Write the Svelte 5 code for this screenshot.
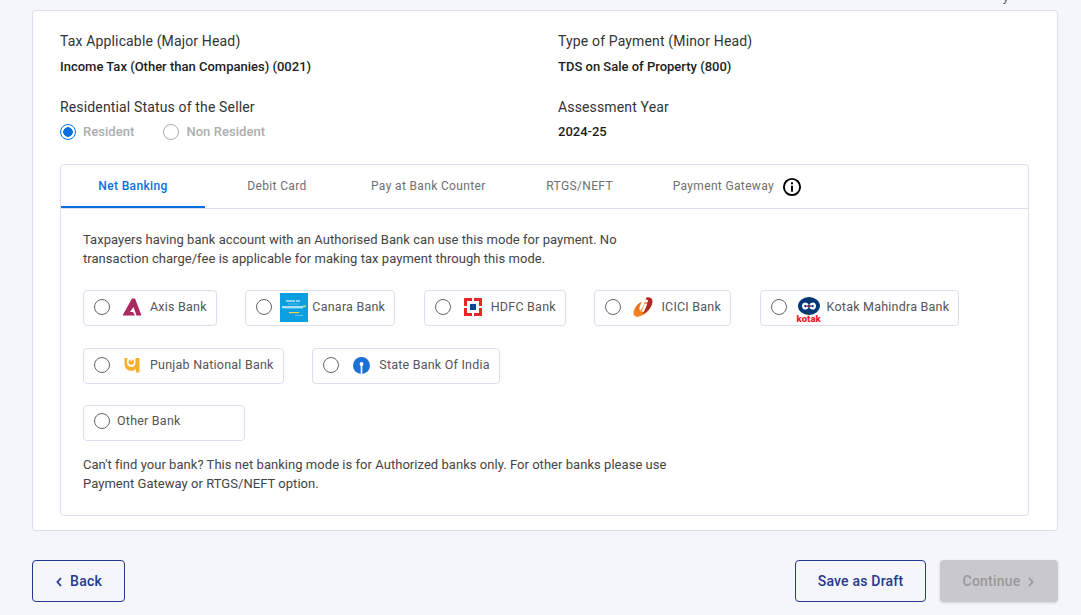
<script lang="ts">
type Bank = { name: string; logo: string }

const summary = [
  { label: 'Tax Applicable (Major Head)', value: 'Income Tax (Other than Companies) (0021)' },
  { label: 'Type of Payment (Minor Head)', value: 'TDS on Sale of Property (800)' },
]

const tabs = ['Net Banking', 'Debit Card', 'Pay at Bank Counter', 'RTGS/NEFT', 'Payment Gateway']

const banks: Bank[] = [
  { name: 'Axis Bank', logo: 'axis' },
  { name: 'Canara Bank', logo: 'canara' },
  { name: 'HDFC Bank', logo: 'hdfc' },
  { name: 'ICICI Bank', logo: 'icici' },
  { name: 'Kotak Mahindra Bank', logo: 'kotak' },
  { name: 'Punjab National Bank', logo: 'pnb' },
  { name: 'State Bank Of India', logo: 'sbi' },
]

let activeTab = $state('Net Banking')
let selectedBank = $state('')
</script>

<main class="page">
  <div class="clipped-top"><span>y</span></div>

  <section class="card">
    <div class="summary">
      {#each summary as item}
        <div class="field">
          <div class="label">{item.label}</div>
          <div class="value">{item.value}</div>
        </div>
      {/each}
      <div class="field second">
        <div class="label">Residential Status of the Seller</div>
        <div class="status">
          <span class="status-opt"><span class="status-radio on"></span>Resident</span>
          <span class="status-opt"><span class="status-radio"></span>Non Resident</span>
        </div>
      </div>
      <div class="field second">
        <div class="label">Assessment Year</div>
        <div class="value year">2024-25</div>
      </div>
    </div>

    <div class="tabs-box">
      <div class="tabs" role="tablist">
        {#each tabs as tab}
          <button
            class="tab"
            class:active={activeTab === tab}
            class:with-icon={tab === 'Payment Gateway'}
            role="tab"
            aria-selected={activeTab === tab}
            onclick={() => (activeTab = tab)}
          >{tab}</button>
        {/each}
        <svg class="info" viewBox="0 0 20 20" width="20" height="20" aria-hidden="true">
          <circle cx="10" cy="10" r="8.1" fill="none" stroke="#000" stroke-width="1.9" />
          <rect x="9" y="8.7" width="2" height="6" fill="#000" />
          <rect x="9" y="5.3" width="2" height="2" fill="#000" />
        </svg>
      </div>

      <div class="tab-body">
        <p class="note">Taxpayers having bank account with an Authorised Bank can use this mode for payment. No transaction charge/fee is applicable for making tax payment through this mode.</p>

        <div class="banks">
          {#each banks as bank}
            <label class="bank">
              <input type="radio" name="bank" value={bank.name} bind:group={selectedBank} />
              <span class="logo logo-{bank.logo}">
                {#if bank.logo === 'axis'}
                  <svg viewBox="0 0 20 18" width="20" height="18">
                    <path d="M0.5 17.5 L10 0.5 L13 0.5 L19.5 17.5 L14.5 17.5 L11.5 9 L5.5 17.5 Z" fill="#ae2860" />
                    <path d="M6.5 14 L11 14 L13 17.5 L5 17.5 Z" fill="#ae2860" />
                  </svg>
                {:else if bank.logo === 'canara'}
                  <svg viewBox="0 0 28 29" width="28" height="29">
                    <rect width="28" height="29" fill="#0a9fe0" />
                    <rect x="6" y="7" width="9" height="2" fill="#8fd3f1" />
                    <rect x="16" y="7" width="4" height="2" fill="#8fd3f1" />
                    <rect x="8" y="10.5" width="11" height="1" fill="#5cbee9" />
                    <rect x="2" y="13" width="21" height="2.4" fill="#a9e0f6" />
                    <rect x="23" y="12" width="3" height="2.5" fill="#7fd08a" />
                    <rect x="9" y="19" width="10" height="1.2" fill="#f5d247" />
                    <rect x="15" y="22" width="8" height="1" fill="#5cbee9" />
                  </svg>
                {:else if bank.logo === 'hdfc'}
                  <svg viewBox="0 0 18 18" width="18" height="18">
                    <rect width="18" height="18" fill="#ed232a" />
                    <rect x="3" y="3" width="12" height="12" fill="#fff" />
                    <rect x="6" y="6" width="6" height="6" fill="#004c8f" />
                    <rect x="8" y="0" width="2" height="3.4" fill="#fff" />
                    <rect x="8" y="14.6" width="2" height="3.4" fill="#fff" />
                    <rect x="0" y="8" width="3.4" height="2" fill="#fff" />
                    <rect x="14.6" y="8" width="3.4" height="2" fill="#fff" />
                  </svg>
                {:else if bank.logo === 'icici'}
                  <svg viewBox="0 0 20 20" width="20" height="20">
                    <path d="M13 0.8 C18 -0.5 20.5 2 19 7 C17.3 13 12 18 6 19.5 C1.5 20.5 -0.5 17.5 1 13 C2.5 9 5.5 6 9 4.8 C7 8 6 11 7 14 C10 11 12 5 13 0.8 Z" fill="#f58220" />
                    <path d="M13 0.8 C18 -0.5 20.5 2 19 7 C17.3 12 13.5 15.5 9.5 17 C12 13 15 7 13 0.8 Z M9 4.8 C5.5 6.5 3.5 10 4.5 14 C2.5 11.5 5 6.5 9 4.8 Z" fill="#ae282e" />
                    <circle cx="13.5" cy="4" r="1.5" fill="#fff" />
                    <path d="M11.5 7 L14.4 6.5 L11 14.5 L8.5 15 Z" fill="#fff" />
                  </svg>
                {:else if bank.logo === 'kotak'}
                  <span class="kotak-mark">
                    <svg viewBox="0 0 22 18" width="22" height="18">
                      <ellipse cx="11" cy="9" rx="11" ry="9" fill="#003874" />
                      <path d="M4 9 C4 4.5 9 4.5 10.6 7.5 L9 9 C8.2 7.5 6.2 7.5 6.2 9 C6.2 10.5 8.2 10.5 9 9.2 L10.6 10.5 C9 13.5 4 13.5 4 9 Z" fill="#fff" />
                      <path d="M18 9 C18 4.5 13 4.5 11.4 7.5 L13 9 C13.8 7.5 15.8 7.5 15.8 9 C15.8 10.5 13.8 10.5 13 9.2 L11.4 10.5 C13 13.5 18 13.5 18 9 Z" fill="#fff" />
                      <rect x="9" y="8.5" width="4" height="1" fill="#ed1c24" />
                    </svg>
                    <span class="kotak-word">kotak</span>
                  </span>
                {:else if bank.logo === 'pnb'}
                  <svg viewBox="0 0 16 17" width="16" height="17">
                    <path d="M0.5 1 H3.5 L3 5 C3 8.5 5 10 7.5 10 C10 10 11.5 8.5 11.5 5.5 V1 H15.5 V15.5 H12 V12 C10.5 13.3 9 13.8 7 13.8 C3 13.8 0.5 10.5 0.5 6.5 Z" fill="#f6b02c" />
                    <circle cx="7.3" cy="5" r="2.8" fill="#f6b02c" />
                    <path d="M6.6 1.2 H8 V4.4 H6.6 Z" fill="#fff" />
                  </svg>
                {:else if bank.logo === 'sbi'}
                  <svg viewBox="0 0 17 17" width="17" height="17">
                    <circle cx="8.5" cy="8.5" r="8.5" fill="#1a6fd8" />
                    <circle cx="8.5" cy="7" r="1.9" fill="#fff" />
                    <rect x="7.7" y="7" width="1.6" height="10" fill="#fff" />
                  </svg>
                {/if}
              </span>
              <span class="bank-name">{bank.name}</span>
            </label>
          {/each}
        </div>

        <label class="bank other">
          <input type="radio" name="bank" value="Other Bank" bind:group={selectedBank} />
          <span class="bank-name">Other Bank</span>
        </label>

        <p class="note foot">Can't find your bank? This net banking mode is for Authorized banks only. For other banks please use Payment Gateway or RTGS/NEFT option.</p>
      </div>
    </div>
  </section>

  <footer class="actions">
    <button class="btn outline back">
      <svg viewBox="0 0 8 12" width="8" height="12"><path d="M6 2 L2.4 6 L6 10" fill="none" stroke="currentColor" stroke-width="1.8" /></svg>
      Back
    </button>
    <div class="right">
      <button class="btn outline draft">Save as Draft</button>
      <button class="btn disabled" disabled>
        Continue
        <svg viewBox="0 0 8 12" width="8" height="12"><path d="M2 2 L5.6 6 L2 10" fill="none" stroke="currentColor" stroke-width="1.8" /></svg>
      </button>
    </div>
  </footer>
</main>

<style>
  :global(body) {
    margin: 0;
    background: #f4f6fb;
    overflow: hidden;
  }

  .page {
    width: 1081px;
    height: 615px;
    box-sizing: border-box;
    padding: 0 23px 0 32px;
    font-family: Roboto, "Liberation Sans", sans-serif;
    overflow: hidden;
  }

  .clipped-top {
    height: 10px;
    overflow: hidden;
    text-align: right;
    padding-right: 49px;
    box-sizing: border-box;
    font-size: 13px;
    line-height: 6px;
    color: #555;
  }

  .clipped-top span {
    display: block;
    margin-top: -6px;
  }

  .card {
    height: 521px;
    box-sizing: border-box;
    background: #fff;
    border: 1px solid #dcdeec;
    border-radius: 4px;
    padding: 20px 28px 14px 27px;
  }

  .summary {
    display: grid;
    grid-template-columns: 498px 1fr;
    grid-template-rows: 47px 47px;
    row-gap: 19px;
    height: 133px;
  }

  .field {
    display: flex;
    flex-direction: column;
  }

  .label {
    font-size: 14px;
    line-height: 20px;
    letter-spacing: 0.15px;
    color: #333;
  }

  .value {
    margin-top: 7px;
    font-size: 13px;
    line-height: 18px;
    font-weight: 500;
    color: #1c1c1c;
  }

  .value.year {
    margin-top: 6px;
  }

  .status {
    display: flex;
    gap: 29px;
    margin-top: 5px;
    height: 18px;
    align-items: center;
  }

  .status-opt {
    display: flex;
    align-items: center;
    gap: 7px;
    font-size: 13px;
    font-weight: 500;
    letter-spacing: 0.05px;
    color: #adadad;
  }

  .status-radio {
    width: 16px;
    height: 16px;
    box-sizing: border-box;
    border: 1px solid #aaa;
    border-radius: 50%;
    margin-top: 2px;
  }

  .status-radio.on {
    border-color: #0b6fe0;
    background: radial-gradient(circle, #0b6fe0 0 4.5px, #fff 5px);
  }

  .tabs-box {
    height: 352px;
    box-sizing: border-box;
    border: 1px solid #dcdeec;
    border-radius: 4px;
  }

  .tabs {
    display: flex;
    align-items: center;
    height: 44px;
    box-sizing: border-box;
    border-bottom: 1px solid #dcdeec;
  }

  .tab {
    min-width: 144px;
    height: 43px;
    padding: 0 22px;
    background: none;
    border: 0;
    border-bottom: 2px solid transparent;
    font: inherit;
    font-size: 12px;
    letter-spacing: 0.35px;
    color: #6f6f6f;
    cursor: pointer;
    box-sizing: border-box;
  }

  .tab.active {
    color: #0b6fe0;
    font-weight: 500;
    border-bottom-color: #0b6fe0;
  }

  .tab.with-icon {
    min-width: 0;
    padding: 0 0 0 21px;
  }

  .info {
    margin-left: 8px;
    margin-top: 1px;
  }

  .tab-body {
    padding: 21px 22px 0;
  }

  .note {
    margin: 0;
    width: 590px;
    font-size: 13px;
    line-height: 19px;
    letter-spacing: 0.04px;
    color: #444;
  }

  .note.foot {
    margin-top: 14px;
  }

  .banks {
    display: flex;
    flex-wrap: wrap;
    gap: 22px 28.6px;
    margin-top: 22px;
  }

  .bank {
    display: flex;
    align-items: center;
    height: 36px;
    box-sizing: border-box;
    padding: 0 9px 2px 10px;
    background: #fff;
    border: 1px solid #dcdeec;
    border-radius: 4px;
    cursor: pointer;
  }

  .bank.other {
    width: 162px;
    margin-top: 21px;
    padding-bottom: 4px;
  }

  .bank input {
    appearance: none;
    flex: none;
    width: 16px;
    height: 16px;
    margin: 0;
    border: 1px solid #666;
    border-radius: 50%;
    background: #fff;
    cursor: pointer;
  }

  .bank input:checked {
    border-color: #0b6fe0;
    background: radial-gradient(circle, #0b6fe0 0 4.5px, #fff 5px);
  }

  .logo {
    display: flex;
    align-items: center;
    justify-content: center;
    flex: none;
    width: 28px;
    margin: 0 4px 0 8px;
  }

  .logo-canara {
    margin-top: 1px;
  }

  .kotak-mark {
    display: flex;
    flex-direction: column;
    align-items: center;
    margin-top: 6px;
  }

  .kotak-word {
    font-size: 9.5px;
    line-height: 8px;
    font-weight: 900;
    color: #ed1c24;
  }

  .bank-name {
    font-size: 12.5px;
    letter-spacing: 0.22px;
    color: #555;
    white-space: nowrap;
    margin-bottom: 2px;
  }

  .other .bank-name {
    margin-left: 7px;
  }

  .actions {
    display: flex;
    justify-content: space-between;
    margin-top: 29px;
  }

  .right {
    display: flex;
    gap: 14px;
  }

  .btn {
    display: flex;
    align-items: center;
    justify-content: center;
    gap: 7px;
    height: 42px;
    box-sizing: border-box;
    padding-bottom: 2px;
    border-radius: 4px;
    font: inherit;
    font-size: 14px;
    font-weight: 500;
    letter-spacing: 0.2px;
    cursor: pointer;
  }

  .btn svg {
    margin-top: 2px;
  }

  .btn.outline {
    background: transparent;
    border: 1px solid #26388e;
    color: #26388e;
  }

  .back {
    width: 93px;
  }

  .draft {
    width: 131px;
  }

  .btn.disabled {
    width: 118px;
    border: 0;
    background: #c9c9cd;
    color: #98989c;
    box-shadow: 0 1px 3px rgba(0, 0, 0, 0.15);
    cursor: default;
  }
</style>
